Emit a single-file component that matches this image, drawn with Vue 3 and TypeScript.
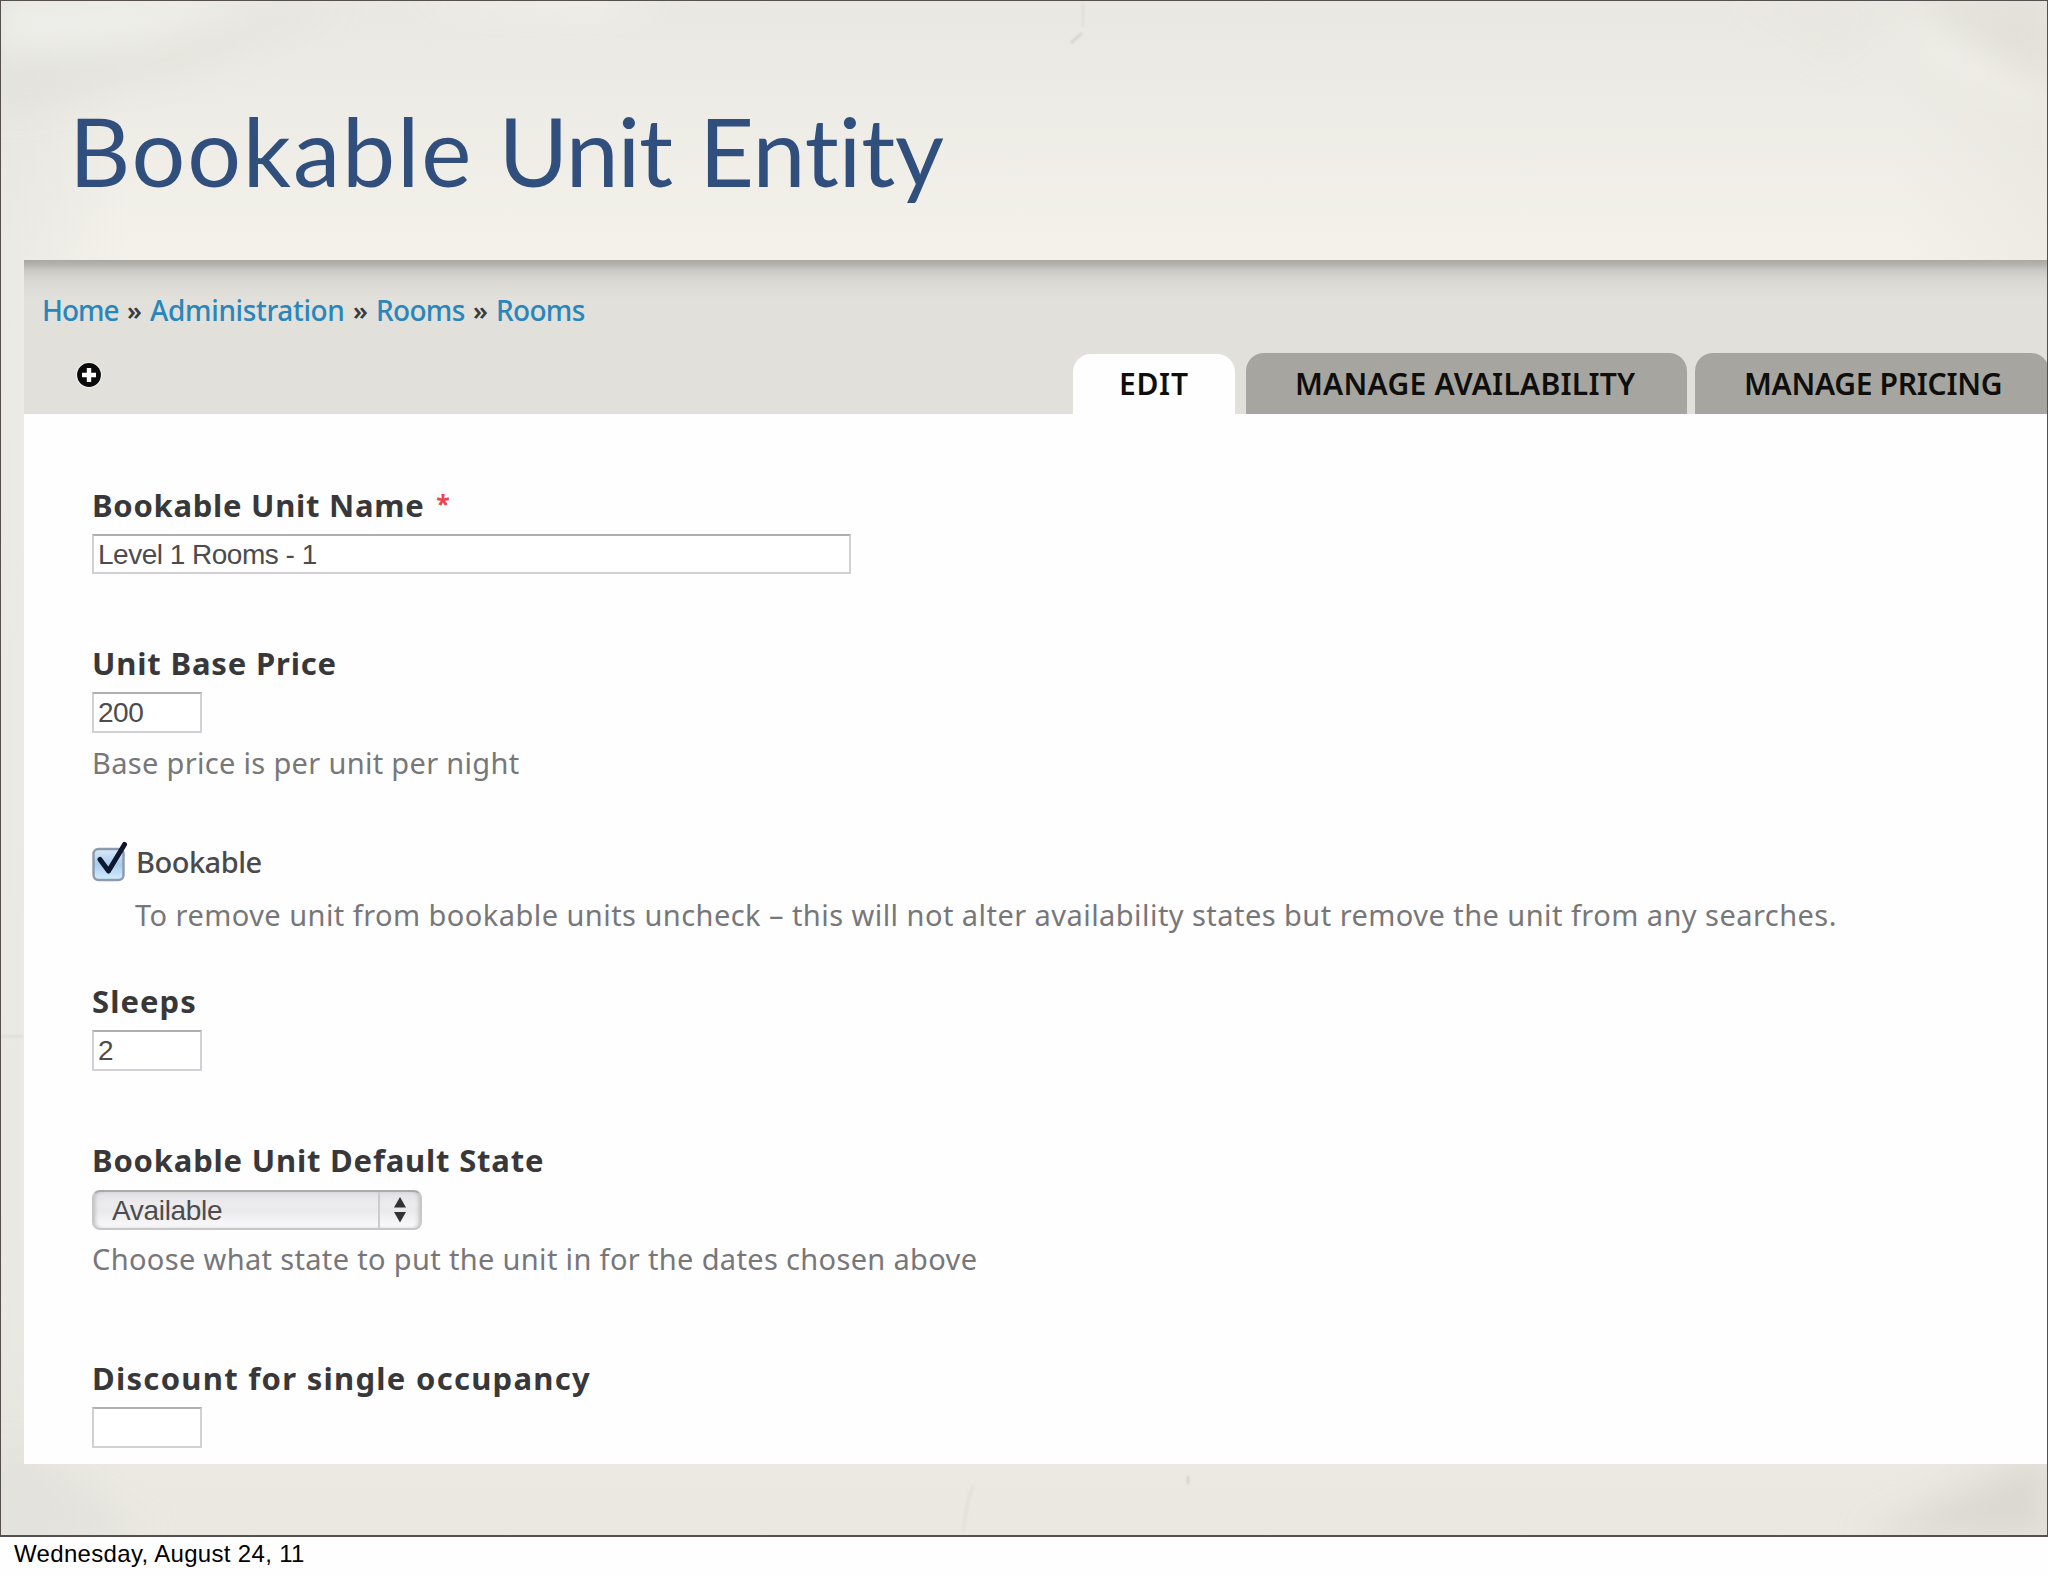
<script setup lang="ts">
import { ref } from 'vue'

interface Crumb {
  label: string
  spacing: string
  width: string
}

interface Tab {
  label: string
  kind: string
}

const crumbs: Crumb[] = [
  { label: 'Home', spacing: '-1px', width: '80px' },
  { label: 'Administration', spacing: '-0.35px', width: '198px' },
  { label: 'Rooms', spacing: '-0.7px', width: '92px' },
  { label: 'Rooms', spacing: '-0.7px', width: '92px' },
]

const tabs: Tab[] = [
  { label: 'EDIT', kind: 'active' },
  { label: 'MANAGE AVAILABILITY', kind: 'availability' },
  { label: 'MANAGE PRICING', kind: 'pricing' },
]

const unitName = ref('Level 1 Rooms - 1')
const basePrice = ref('200')
const sleeps = ref('2')
const discount = ref('')
</script>

<template>
  <div class="page">
    <section class="slide">
      <svg class="paper" viewBox="0 0 2046 1535" preserveAspectRatio="none" aria-hidden="true">
        <defs>
          <filter id="soft" x="-20%" y="-20%" width="140%" height="140%"><feGaussianBlur stdDeviation="16" /></filter>
          <filter id="crease" x="-5%" y="-5%" width="110%" height="110%"><feGaussianBlur stdDeviation="1.2" /></filter>
        </defs>
        <g filter="url(#soft)">
          <path d="M0 62 L150 45 L290 5 L340 0 L180 75 L0 110Z" fill="#dedfda" opacity=".5" />
          <path d="M0 0 H270 L120 40 L0 50Z" fill="#f0f1ec" opacity=".8" />
          <path d="M400 0 H670 L600 18 L470 12Z" fill="#f3f2ec" />
          <path d="M1740 0 H1890 L1830 60 L1800 24Z" fill="#e5e2dc" opacity=".35" />
          <path d="M1900 0 H2046 V85 L1970 50Z" fill="#dddbd4" opacity=".55" />
          <path d="M1890 0 L1960 30 L2046 90 V120 L1930 70Z" fill="#f4f2ec" opacity=".5" />
          <path d="M0 1445 L150 1535 H0Z" fill="#dfddd9" opacity=".5" />
          <path d="M1860 1535 L2046 1455 V1535Z" fill="#d6d3ca" opacity=".7" />
        </g>
        <g filter="url(#crease)" fill="none">
          <path d="M1082 2 V26" stroke="#dcdad4" stroke-width="1.5" />
          <path d="M1081 32 L1070 42" stroke="#cfcdc7" stroke-width="2" />
          <path d="M972 1485 L966 1505 L962 1532" stroke="#e3e0d9" stroke-width="3" />
          <path d="M1187 1476 V1484" stroke="#cfccc5" stroke-width="2" />
          <path d="M0 1036 H22" stroke="#dddad4" stroke-width="2" />
        </g>
      </svg>

      <h1 class="title"><span class="w1">Bookable</span> <span class="w2">Unit</span> <span class="w3">Entity</span></h1>

      <div class="panel">
        <header class="head">
          <nav class="crumbs">
            <template v-for="(c, i) in crumbs" :key="i">
              <span v-if="i > 0" class="sep">»</span>
              <a class="crumb" :style="{ letterSpacing: c.spacing, width: c.width }">{{ c.label }}</a>
            </template>
          </nav>
          <div class="bar">
            <svg class="add" viewBox="0 0 26 26" aria-hidden="true">
              <circle cx="13" cy="13" r="13" fill="#f2f2ee" />
              <circle cx="13" cy="13" r="11.9" fill="#0b0b0b" />
              <path d="M13 6 V20 M6 13 H20" stroke="#fff" stroke-width="4.4" />
            </svg>
            <div class="tabs">
              <a v-for="t in tabs" :key="t.label" class="tab" :class="t.kind">{{ t.label }}</a>
            </div>
          </div>
        </header>

        <form class="form" @submit.prevent>
          <label class="label name">Bookable Unit Name <span class="req">*</span></label>
          <input v-model="unitName" class="input wide" type="text" />

          <label class="label price">Unit Base Price</label>
          <input v-model="basePrice" class="input" type="text" />
          <p class="help base">Base price is per unit per night</p>

          <div class="check">
            <svg class="box" viewBox="0 0 40 44" aria-hidden="true">
              <defs>
                <linearGradient id="blue" x1="0" y1="0" x2="0" y2="1">
                  <stop offset="0" stop-color="#dce9f7" />
                  <stop offset=".5" stop-color="#a9cbef" />
                  <stop offset="1" stop-color="#d3effd" />
                </linearGradient>
              </defs>
              <rect x="2.5" y="9" width="30" height="31" rx="5" fill="url(#blue)" stroke="#8c9aac" stroke-width="2.4" />
              <path d="M9 19.5 L17.5 31 L33.5 4.5" fill="none" stroke="#0d1730" stroke-width="5" stroke-linecap="round" stroke-linejoin="round" />
            </svg>
            <span class="check-label">Bookable</span>
          </div>
          <p class="help remove">To remove unit from bookable units uncheck – this will not alter availability states but remove the unit from any searches.</p>

          <label class="label sleeps">Sleeps</label>
          <input v-model="sleeps" class="input" type="text" />

          <label class="label state">Bookable Unit Default State</label>
          <div class="select" role="listbox">
            <span class="value">Available</span>
            <span class="knob">
              <svg width="14" height="26" viewBox="0 0 14 26" aria-hidden="true">
                <path d="M7 0 L13 10.5 H1Z M7 25.5 L13 15 H1Z" fill="#333" />
              </svg>
            </span>
          </div>
          <p class="help choose">Choose what state to put the unit in for the dates chosen above</p>

          <label class="label discount">Discount for single occupancy</label>
          <input v-model="discount" class="input" type="text" />
        </form>
      </div>
    </section>
    <footer class="date">Wednesday, August 24, 11</footer>
  </div>
</template>

<style>
body {
  margin: 0;
  background: #fff;
}
</style>

<style scoped>
.page {
  width: 2048px;
  height: 1576px;
  overflow: hidden;
  background: #fefefe;
}

.slide {
  position: relative;
  box-sizing: border-box;
  height: 1537px;
  border: 1px solid #55504e;
  border-bottom-width: 2px;
  padding-left: 23px;
  overflow: hidden;
  background:
    linear-gradient(90deg, rgba(222, 222, 216, 0.4), rgba(222, 222, 216, 0) 130px),
    linear-gradient(270deg, rgba(224, 221, 213, 0.3), rgba(224, 221, 213, 0) 150px),
    linear-gradient(180deg, #eae8e2 0, #edebe5 90px, #f4f1eb 250px, #f1eee8 1300px, #ebe9e2 1470px, #eae8e1 100%);
}

.paper {
  position: absolute;
  inset: 0;
  width: 100%;
  height: 100%;
}

.title {
  position: relative;
  margin: 0;
  height: 259px;
  box-sizing: border-box;
  padding: 89px 0 0 45px;
  font: 400 95px/120px Lato, sans-serif;
  color: #314f7d;
  white-space: nowrap;
}

.w1 {
  letter-spacing: 1.8px;
}

.w2 {
  margin-left: 1px;
  letter-spacing: -1.2px;
}

.w3 {
  margin-left: 3px;
  letter-spacing: -0.2px;
}

.panel {
  position: relative;
  height: 1204px;
  background: #fefefe;
  font-family: 'Noto Sans', sans-serif;
}

.head {
  display: flex;
  flex-direction: column;
  justify-content: space-between;
  height: 154px;
  background: linear-gradient(180deg, #a9a8a2 0, #b2b1ab 4px, #c9c8c2 10px, #d6d5cf 18px, #dedcd6 28px, #e1e0da 40px);
}

.crumbs {
  display: flex;
  padding: 30px 0 0 18px;
  font-size: 28px;
  font-weight: 500;
  line-height: 40px;
  white-space: nowrap;
}

.crumb {
  color: #2a86ba;
}

.sep {
  width: 23px;
  margin-left: 5px;
  color: #3c3c3a;
  font-size: 26px;
  font-weight: 600;
}

.bar {
  display: flex;
  align-items: flex-end;
  height: 61px;
}

.add {
  width: 26px;
  height: 26px;
  margin: 0 971px 26px 52px;
  flex: none;
}

.tabs {
  display: flex;
  flex: none;
}

.tab {
  box-sizing: border-box;
  height: 61px;
  padding-top: 11px;
  border-radius: 18px 18px 0 0;
  background: #a6a59f;
  color: #0e0e0d;
  font-size: 30px;
  font-weight: 650;
  line-height: 40px;
  white-space: nowrap;
}

.active {
  width: 162px;
  height: 60px;
  margin-top: 1px;
  padding-top: 10px;
  padding-left: 46px;
  background: #fefefe;
  letter-spacing: 0.7px;
}

.availability {
  width: 441px;
  margin-left: 11px;
  padding-left: 49px;
  letter-spacing: 0.25px;
}

.pricing {
  width: 354px;
  margin-left: 8px;
  padding-left: 49px;
  letter-spacing: -0.3px;
}

.form {
  display: flex;
  flex-direction: column;
  align-items: flex-start;
  padding: 71px 0 0 68px;
}

.label {
  height: 40px;
  margin-bottom: 9px;
  font-size: 31px;
  font-weight: 690;
  line-height: 40px;
  color: #38383a;
  white-space: nowrap;
}

.name {
  letter-spacing: 0.72px;
}

.req {
  margin-left: 3px;
  font-size: 25px;
  font-weight: 700;
  line-height: 1;
  vertical-align: 4px;
  color: #ee4348;
}

.price {
  margin-top: 69px;
  letter-spacing: 0.82px;
}

.sleeps {
  margin-top: 46px;
  letter-spacing: 1.05px;
}

.state {
  margin-top: 69px;
  letter-spacing: 0.8px;
}

.discount {
  margin-top: 79px;
  letter-spacing: 1.28px;
}

.input {
  box-sizing: border-box;
  width: 110px;
  height: 41px;
  margin: 0;
  padding: 1px 0 0 4px;
  border: 2px solid #d2d0d4;
  border-top: 2px solid #b0aeb0;
  border-radius: 0;
  outline: none;
  background: #fff;
  color: #4c4c4e;
  font: 28px/36px 'Liberation Sans', sans-serif;
  letter-spacing: -0.5px;
}

.wide {
  width: 759px;
  height: 40px;
}

.help {
  margin: 0;
  font-size: 29px;
  font-weight: 440;
  line-height: 40px;
  color: #77777a;
  white-space: nowrap;
}

.base {
  margin-top: 10px;
  letter-spacing: 0.32px;
}

.check {
  display: flex;
  align-items: center;
  height: 40px;
  margin-top: 59px;
}

.box {
  width: 40px;
  height: 44px;
  margin-top: -1px;
  margin-left: -1px;
}

.check-label {
  margin-left: 5px;
  font-size: 29px;
  font-weight: 470;
  line-height: 40px;
  letter-spacing: -0.5px;
  color: #4a4a4c;
}

.remove {
  margin-top: 13px;
  margin-left: 43px;
  letter-spacing: 0.45px;
}

.select {
  box-sizing: border-box;
  display: flex;
  width: 330px;
  height: 40px;
  margin-top: 1px;
  border: 2px solid #c8c6c9;
  border-top-color: #aaa8ab;
  border-radius: 8px;
  background: linear-gradient(180deg, #e2e1e3 0, #ececee 35%, #e9e8ea 50%, #fafafb 100%);
  box-shadow: inset 3px 0 4px -2px #bbb, inset -3px 0 4px -2px #bbb;
}

.value {
  flex: 1;
  padding-left: 18px;
  font: 28px/37px 'Liberation Sans', sans-serif;
  letter-spacing: -0.32px;
  color: #4c4c4e;
}

.knob {
  display: flex;
  align-items: center;
  justify-content: center;
  width: 40px;
  border-left: 2px solid #cdcbce;
}

.choose {
  margin-top: 9px;
  letter-spacing: 0.34px;
}

.date {
  padding-left: 14px;
  font: 24px/34px 'Liberation Sans', sans-serif;
  letter-spacing: 0.33px;
  color: #000;
}
</style>
